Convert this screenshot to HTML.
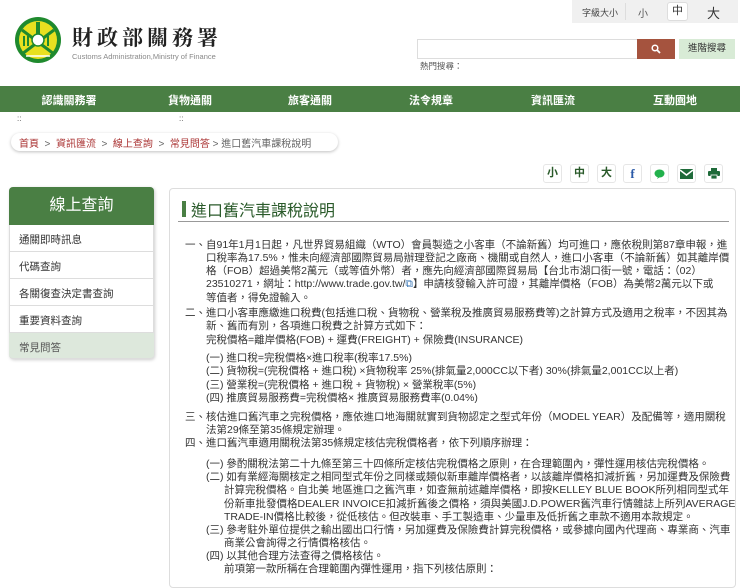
<!DOCTYPE html>
<html><head><meta charset="utf-8">
<style>
*{margin:0;padding:0;box-sizing:border-box}
body{width:740px;height:576px;overflow:hidden;background:#fff;font-family:"Liberation Sans","Noto Sans CJK TC",sans-serif;color:#333;position:relative}
.a{position:absolute;white-space:nowrap}
.nav{position:absolute;left:0;top:86px;width:740px;height:26px;background:#4a7f44}
.nav span{position:absolute;top:6px;color:#fff;font-size:11px;font-weight:bold;transform:translateX(-50%)}
.side div{position:absolute;left:9px;width:145px;height:27px;border-bottom:1px solid #ddd;font-size:10.5px;padding:7px 0 0 10px;color:#333}
.ic{position:absolute;top:164px;width:19px;height:19px;border:1px solid #e6e6e6;border-radius:3px;font-size:11px;font-weight:bold;color:#2a5a2a;text-align:center;line-height:17px}
.t{position:absolute;white-space:nowrap;font-size:10.5px;color:#333;line-height:13px}
</style></head><body>
<svg class="a" style="left:14px;top:16px" width="48" height="48" viewBox="0 0 48 48">
<circle cx="24" cy="24" r="23" fill="#1f8a2e"/>
<circle cx="24" cy="24" r="19" fill="#e8e020"/>
<path d="M8 14 L40 38 M40 14 L8 38" stroke="#1f8a2e" stroke-width="3"/>
<rect x="22" y="6" width="4" height="12" fill="#1f8a2e"/>
<circle cx="24" cy="24" r="6" fill="#fff" stroke="#1f8a2e" stroke-width="1.5"/>
<path d="M10 20v10M14 20v10M34 20v10" stroke="#1f8a2e" stroke-width="2"/>
<path d="M12 40h24" stroke="#fff" stroke-width="1.5"/>
</svg>
<div class="a" style="left:72px;top:22px;font-family:'Noto Serif CJK SC',serif;font-size:21px;font-weight:bold;color:#222;letter-spacing:4px">財政部關務署</div>
<div class="a" style="left:72px;top:52px;font-size:7.5px;color:#888">Customs Administration,Ministry of Finance</div>
<div class="a" style="left:572px;top:0;width:166px;height:23px;background:#f0f0f0"></div>
<div class="a" style="left:582px;top:6px;font-size:9px;color:#444">字級大小</div>
<div class="a" style="left:625px;top:3px;width:1px;height:17px;background:#ddd"></div>
<div class="a" style="left:638px;top:5px;font-size:10px;color:#555">小</div>
<div class="a" style="left:667px;top:2px;width:21px;height:19px;background:#fff;border:1px solid #ddd;border-radius:3px;font-size:11px;text-align:center;line-height:17px">中</div>
<div class="a" style="left:707px;top:3px;font-size:13px;color:#333">大</div>
<div class="a" style="left:417px;top:39px;width:221px;height:20px;border:1px solid #ddd;background:#fff"></div>
<div class="a" style="left:637px;top:39px;width:38px;height:20px;background:#a5533e"></div>
<svg class="a" style="left:651px;top:44px" width="10" height="10" viewBox="0 0 10 10"><circle cx="4" cy="4" r="2.8" fill="none" stroke="#fff" stroke-width="1.5"/><path d="M6 6l3 3" stroke="#fff" stroke-width="1.8"/></svg>
<div class="a" style="left:679px;top:39px;width:56px;height:20px;background:#d8ebd6;font-size:9.5px;color:#333;text-align:center;line-height:20px">進階搜尋</div>
<div class="a" style="left:420px;top:60px;font-size:8.5px;color:#555">熱門搜尋：</div>
<div class="nav">
<span style="left:69px">認識關務署</span><span style="left:190px">貨物通關</span><span style="left:310px">旅客通關</span><span style="left:431px">法令規章</span><span style="left:553px">資訊匯流</span><span style="left:675px">互動園地</span>
</div>
<div class="a" style="left:17px;top:114px;font-size:8px;color:#555">::</div>
<div class="a" style="left:179px;top:114px;font-size:8px;color:#555">::</div>
<div class="a" style="left:11px;top:133px;width:327px;height:18px;border-radius:9px;box-shadow:0 1px 3px rgba(0,0,0,.25);background:#fff"></div>
<div class="a" style="left:19px;top:135px;font-size:10px;color:#666"><span style="color:#a33">首頁</span> &nbsp;&gt;&nbsp; <span style="color:#a33">資訊匯流</span> &nbsp;&gt;&nbsp; <span style="color:#a33">線上查詢</span> &nbsp;&gt;&nbsp; <span style="color:#a33">常見問答</span> &gt; 進口舊汽車課稅說明</div>
<div class="ic" style="left:543px">小</div>
<div class="ic" style="left:570px">中</div>
<div class="ic" style="left:597px">大</div>
<div class="ic" style="left:623px;color:#2b5aa8;font-family:'Liberation Serif',serif;font-size:13px">f</div>
<div class="ic" style="left:650px"><svg width="11" height="10" viewBox="0 0 11 10" style="margin-top:4px"><ellipse cx="5.5" cy="4.5" rx="5" ry="4" fill="#22b14c"/><path d="M4 8l-1 2 3-2z" fill="#22b14c"/></svg></div>
<div class="ic" style="left:677px"><svg width="13" height="10" viewBox="0 0 13 10" style="margin-top:4px"><rect width="13" height="10" fill="#1f6b3a"/><path d="M0 1l6.5 5 6.5-5" fill="none" stroke="#fff" stroke-width="1.5"/></svg></div>
<div class="ic" style="left:704px"><svg width="12" height="11" viewBox="0 0 12 11" style="margin-top:3px"><rect x="3" y="0" width="6" height="3" fill="#1f6b3a"/><rect x="0" y="3" width="12" height="5" rx="1" fill="#1f6b3a"/><rect x="3" y="7" width="6" height="4" fill="#1f6b3a" stroke="#fff" stroke-width=".8"/></svg></div>
<div class="a" style="left:9px;top:187px;width:145px;height:172px;border:1px solid #ddd;border-radius:4px;box-shadow:1px 1px 3px rgba(0,0,0,.2)"></div>
<div class="a" style="left:9px;top:187px;width:145px;height:38px;background:#4a7f44;border-radius:4px 4px 0 0;color:#fff;font-size:16px;text-align:center;line-height:38px">線上查詢</div>
<div class="side">
<div style="top:225px">通關即時訊息</div>
<div style="top:252px">代碼查詢</div>
<div style="top:279px">各關復查決定書查詢</div>
<div style="top:306px">重要資料查詢</div>
<div style="top:333px;background:#dde8dc;color:#555;height:26px;border-radius:0 0 4px 4px">常見問答</div>
</div>
<div class="a" style="left:169px;top:188px;width:567px;height:400px;border:1px solid #ddd;border-radius:4px"></div>
<div class="a" style="left:182px;top:201px;width:4px;height:16px;background:#4a7f44"></div>
<div class="a" style="left:191px;top:197px;font-size:16px;color:#2a5a2a">進口舊汽車課稅說明</div>
<div class="a" style="left:178px;top:221px;width:551px;height:1px;background:#999"></div>

<div class="t" style="left:185px;top:239px">一、</div>
<div class="t" style="left:206px;top:239px">自91年1月1日起，凡世界貿易組織（WTO）會員製造之小客車（不論新舊）均可進口，應依稅則第87章申報，進</div>
<div class="t" style="left:206px;top:252px">口稅率為17.5%，惟未向經濟部國際貿易局辦理登記之廠商、機關或自然人，進口小客車（不論新舊）如其離岸價</div>
<div class="t" style="left:206px;top:265px">格（FOB）超過美幣2萬元（或等值外幣）者，應先向經濟部國際貿易局【台北市湖口街一號，電話：（02）</div>
<div class="t" style="left:206px;top:278px">23510271，網址：http://www.trade.gov.tw/<span style="color:#2b6cb0">⧉</span>】申請核發輸入許可證，其離岸價格（FOB）為美幣2萬元以下或</div>
<div class="t" style="left:206px;top:292px">等值者，得免證輸入。</div>
<div class="t" style="left:185px;top:307px">二、</div>
<div class="t" style="left:206px;top:307px">進口小客車應繳進口稅費(包括進口稅、貨物稅、營業稅及推廣貿易服務費等)之計算方式及適用之稅率，不因其為</div>
<div class="t" style="left:206px;top:320px">新、舊而有別，各項進口稅費之計算方式如下：</div>
<div class="t" style="left:206px;top:334px">完稅價格=離岸價格(FOB) + 運費(FREIGHT) + 保險費(INSURANCE)</div>
<div class="t" style="left:206px;top:352px">(一) 進口稅=完稅價格×進口稅率(稅率17.5%)</div>
<div class="t" style="left:206px;top:365px">(二) 貨物稅=(完稅價格 + 進口稅) ×貨物稅率 25%(排氣量2,000CC以下者) 30%(排氣量2,001CC以上者)</div>
<div class="t" style="left:206px;top:379px">(三) 營業稅=(完稅價格 + 進口稅 + 貨物稅) × 營業稅率(5%)</div>
<div class="t" style="left:206px;top:392px">(四) 推廣貿易服務費=完稅價格× 推廣貿易服務費率(0.04%)</div>
<div class="t" style="left:185px;top:411px">三、</div>
<div class="t" style="left:206px;top:411px">核估進口舊汽車之完稅價格，應依進口地海關就實到貨物認定之型式年份（MODEL YEAR）及配備等，適用關稅</div>
<div class="t" style="left:206px;top:424px">法第29條至第35條規定辦理。</div>
<div class="t" style="left:185px;top:437px">四、</div>
<div class="t" style="left:206px;top:437px">進口舊汽車適用關稅法第35條規定核估完稅價格者，依下列順序辦理：</div>
<div class="t" style="left:206px;top:458px">(一) 參酌關稅法第二十九條至第三十四條所定核估完稅價格之原則，在合理範圍內，彈性運用核估完稅價格。</div>
<div class="t" style="left:206px;top:471px">(二) 如有業經海關核定之相同型式年份之同樣或類似新車離岸價格者，以該離岸價格扣減折舊，另加運費及保險費</div>
<div class="t" style="left:224px;top:484px">計算完稅價格。自北美 地區進口之舊汽車，如查無前述離岸價格，即按KELLEY BLUE BOOK所列相同型式年</div>
<div class="t" style="left:224px;top:498px">份新車批發價格DEALER INVOICE扣減折舊後之價格，須與美國J.D.POWER舊汽車行情雜誌上所列AVERAGE</div>
<div class="t" style="left:224px;top:511px">TRADE-IN價格比較後，從低核估。但改裝車、手工製造車、少量車及低折舊之車款不適用本款規定。</div>
<div class="t" style="left:206px;top:524px">(三) 參考駐外單位提供之輸出國出口行情，另加運費及保險費計算完稅價格，或參據向國內代理商、專業商、汽車</div>
<div class="t" style="left:224px;top:537px">商業公會詢得之行情價格核估。</div>
<div class="t" style="left:206px;top:550px">(四) 以其他合理方法查得之價格核估。</div>
<div class="t" style="left:224px;top:563px">前項第一款所稱在合理範圍內彈性運用，指下列核估原則：</div>
</body></html>
